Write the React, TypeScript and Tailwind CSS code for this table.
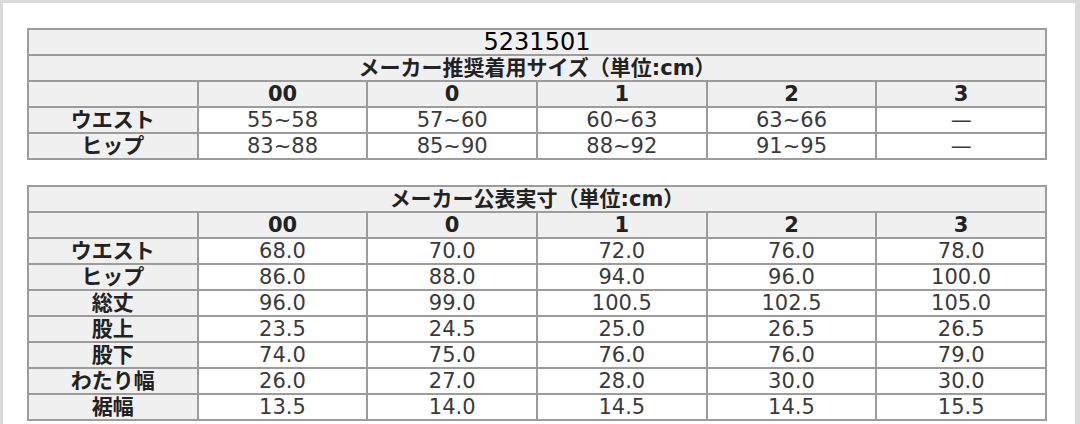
import React from "react";

// size chart, two tables: recommended sizes + published measurements
const sizes = ["00", "0", "1", "2", "3"];

const recommended: [string, string[]][] = [
  ["ウエスト", ["55~58", "57~60", "60~63", "63~66", "—"]],
  ["ヒップ", ["83~88", "85~90", "88~92", "91~95", "—"]],
];

const actual: [string, string[]][] = [
  ["ウエスト", ["68.0", "70.0", "72.0", "76.0", "78.0"]],
  ["ヒップ", ["86.0", "88.0", "94.0", "96.0", "100.0"]],
  ["総丈", ["96.0", "99.0", "100.5", "102.5", "105.0"]],
  ["股上", ["23.5", "24.5", "25.0", "26.5", "26.5"]],
  ["股下", ["74.0", "75.0", "76.0", "76.0", "79.0"]],
  ["わたり幅", ["26.0", "27.0", "28.0", "30.0", "30.0"]],
  ["裾幅", ["13.5", "14.0", "14.5", "14.5", "15.5"]],
];

const font = "font-['DejaVu_Sans','Noto_Sans_CJK_JP',sans-serif]";

function HeadCell({
  children,
  span = false,
  light = false,
}: {
  children?: React.ReactNode;
  span?: boolean;
  light?: boolean;
}) {
  return (
    <div
      className={`${span ? "col-span-6" : ""} ${light ? "font-normal text-[24px] text-black" : "font-bold text-[21px] text-[#222]"} h-[24px] bg-[#f0f0f0] flex items-center justify-center leading-none`}
    >
      {children}
    </div>
  );
}

function DataCell({ children }: { children: React.ReactNode }) {
  return (
    <div className="h-[24px] bg-white flex items-center justify-center text-[21px] leading-none text-[#3a3a3a] pt-[1px]">
      {children}
    </div>
  );
}

function SizeTable({
  code,
  title,
  rows,
}: {
  code?: string;
  title: string;
  rows: [string, string[]][];
}) {
  return (
    <div className="grid grid-cols-6 gap-[2px] p-[2px] bg-[#9c9c9c] w-[1020px]">
      {code && (
        <HeadCell span light>
          {code}
        </HeadCell>
      )}
      <HeadCell span>{title}</HeadCell>
      <HeadCell />
      {sizes.map((s) => (
        <HeadCell key={s}>{s}</HeadCell>
      ))}
      {rows.map(([label, vals]) => (
        <React.Fragment key={label}>
          <HeadCell>{label}</HeadCell>
          {vals.map((v, i) => (
            <DataCell key={i}>{v}</DataCell>
          ))}
        </React.Fragment>
      ))}
    </div>
  );
}

export default function App() {
  return (
    <div className={`w-[1080px] h-[424px] bg-[#d9d9d9] pt-[3px] pl-[3px] pr-[5px] ${font}`}>
      <div className="h-full bg-white pl-[24px] pt-[25px] flex flex-col gap-[25px]">
        <SizeTable code="5231501" title="メーカー推奨着用サイズ（単位:cm）" rows={recommended} />
        <SizeTable title="メーカー公表実寸（単位:cm）" rows={actual} />
      </div>
    </div>
  );
}
